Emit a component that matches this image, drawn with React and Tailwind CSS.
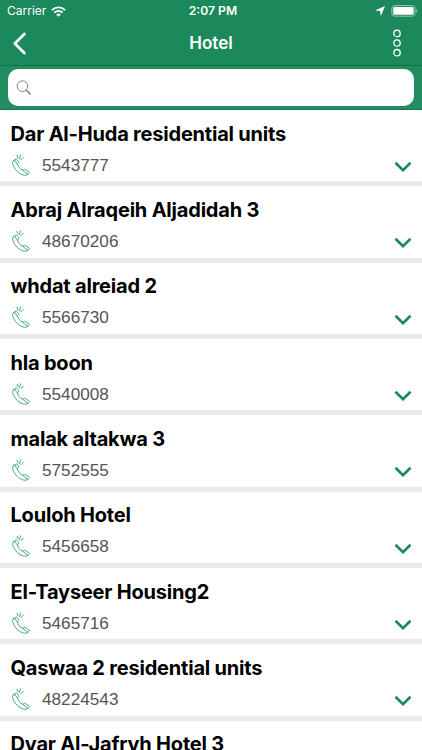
import React from 'react';

const hotels = [
  { name: 'Dar Al-Huda residential units', phone: '5543777' },
  { name: 'Abraj Alraqeih Aljadidah 3', phone: '48670206' },
  { name: 'whdat alreiad 2', phone: '5566730' },
  { name: 'hla boon', phone: '5540008' },
  { name: 'malak altakwa 3', phone: '5752555' },
  { name: 'Louloh Hotel', phone: '5456658' },
  { name: 'El-Tayseer Housing2', phone: '5465716' },
  { name: 'Qaswaa 2 residential units', phone: '48224543' },
  { name: 'Dyar Al-Jafryh Hotel 3', phone: '' },
];

function WifiIcon() {
  return (
    <svg className="h-[11px] w-[15px]" viewBox="0 0 15 11" fill="none" stroke="white" strokeWidth="1.9">
      <path d="M0.9 4.1C4.6 0.5 10.4 0.5 14.1 4.1" />
      <path d="M3.3 6.6C5.7 4.4 9.3 4.4 11.7 6.6" />
      <path d="M7.5 10.8L5.2 8.5C6.5 7.3 8.5 7.3 9.8 8.5Z" fill="white" stroke="none" />
    </svg>
  );
}

function PhoneIcon() {
  return (
    <svg className="ml-[1px] h-[22px] w-[18px] shrink-0" viewBox="0 0 18 22" fill="none" stroke="#3da578" strokeWidth="0.95" strokeLinecap="round" strokeLinejoin="round">
      <path d="M1.6 6.7L4 5.2C4.5 4.9 4.9 5 5.2 5.5L6.6 7.8C6.9 8.3 6.8 8.7 6.4 9L5.3 9.8C5.7 12.2 8.2 15.2 10.8 16.3L12.1 15.5C12.5 15.2 12.9 15.2 13.4 15.5L16.9 17.9C17.4 18.3 17.5 18.7 17.1 19.2C15.8 21.2 13 21.7 10.6 20.8C5.3 18.8 1 13.5 0.6 8.9C0.5 7.9 0.8 7.2 1.6 6.7Z" />
      <path d="M2.5 6.2L5.3 9.8M10.8 16.3L15.8 20.4" />
      <path d="M5 1.3L6.1 3.9M8.4 0.8L7.6 4.6M11.5 3L8.9 5.8" />
    </svg>
  );
}

function HotelRow({ name, phone }) {
  return (
    <li className="h-[76.35px] border-b-[5px] border-[#eaeaea] bg-white pl-[10.5px] pr-[10px] pt-[9.5px]">
      <h2 className="h-7 whitespace-nowrap text-[20px] font-bold leading-7 tracking-[-0.2px] text-black">{name}</h2>
      {phone && (
        <div className="flex h-[34px] items-center">
          <PhoneIcon />
          <span className="ml-[12.5px] font-['Liberation_Sans',sans-serif] text-[17.2px] leading-6 text-[#555]">{phone}</span>
          <svg className="ml-auto mt-[4px] h-[11px] w-[18px]" viewBox="0 0 18 11" fill="none" stroke="#1b895b" strokeWidth="2.6">
            <path d="M1.5 1.8L9 9.2L16.5 1.8" />
          </svg>
        </div>
      )}
    </li>
  );
}

export default function App() {
  return (
    <div className="flex h-[750px] w-[422px] flex-col overflow-hidden bg-white font-['Inter',sans-serif]">
      <header className="h-[110px] shrink-0 bg-[#1b895b] text-white">
        <div className="grid h-[22px] grid-cols-3 items-center pl-[7px] pr-[4px]">
          <div className="flex items-center gap-[5px] text-[12px]">
            <span>Carrier</span>
            <WifiIcon />
          </div>
          <div className="pl-[1px] text-center text-[12.2px] font-semibold">2:07 PM</div>
          <div className="flex items-center justify-end gap-[6px]">
            <svg className="h-[10px] w-[10px]" viewBox="0 0 10 10" fill="white">
              <path d="M10 0L5.9 10L5 5.1L0 4.4Z" />
            </svg>
            <svg className="h-[12px] w-[27px]" viewBox="0 0 27 12">
              <rect x="0.8" y="0.6" width="23.2" height="10.6" rx="2.6" fill="none" stroke="#91c7b0" />
              <rect x="2.2" y="2" width="20.4" height="7.8" rx="1.2" fill="white" />
              <path d="M25.2 4.1C26.8 4.8 26.8 7 25.2 7.7Z" fill="#91c7b0" />
            </svg>
          </div>
        </div>
        <div className="grid h-[44px] grid-cols-3 items-center border-b border-[#15704a] pl-[12px] pr-[20px]">
          <svg className="h-[23px] w-[15px]" viewBox="0 0 15 23" fill="none" stroke="white" strokeWidth="2.8" strokeLinecap="round" strokeLinejoin="round">
            <path d="M12.4 2.1L2.8 11.5L12.4 20.9" />
          </svg>
          <h1 className="pl-[8px] text-center text-[17px] font-semibold">Hotel</h1>
          <svg className="ml-auto h-[29px] w-[10px]" viewBox="0 0 10 29" fill="none" stroke="white" strokeWidth="1.3">
            <circle cx="5" cy="4.4" r="3.2" />
            <circle cx="5" cy="14" r="3.2" />
            <circle cx="5" cy="23.7" r="3.2" />
          </svg>
        </div>
        <div className="h-[44px] border-b border-[#187a51] bg-[#218d60] px-[8px] pt-[3px]">
          <div className="flex h-[37px] items-center rounded-[10px] bg-white pl-[8px]">
            <svg className="h-[16px] w-[16px]" viewBox="0 0 16 16" fill="none" stroke="#838383">
              <circle cx="6.4" cy="6.2" r="5.3" strokeWidth="1" />
              <path d="M10.2 10L14.6 14.4" strokeWidth="1.6" />
            </svg>
          </div>
        </div>
      </header>
      <ul className="shrink-0">
        {hotels.map((hotel) => (
          <HotelRow key={hotel.name} name={hotel.name} phone={hotel.phone} />
        ))}
      </ul>
    </div>
  );
}
